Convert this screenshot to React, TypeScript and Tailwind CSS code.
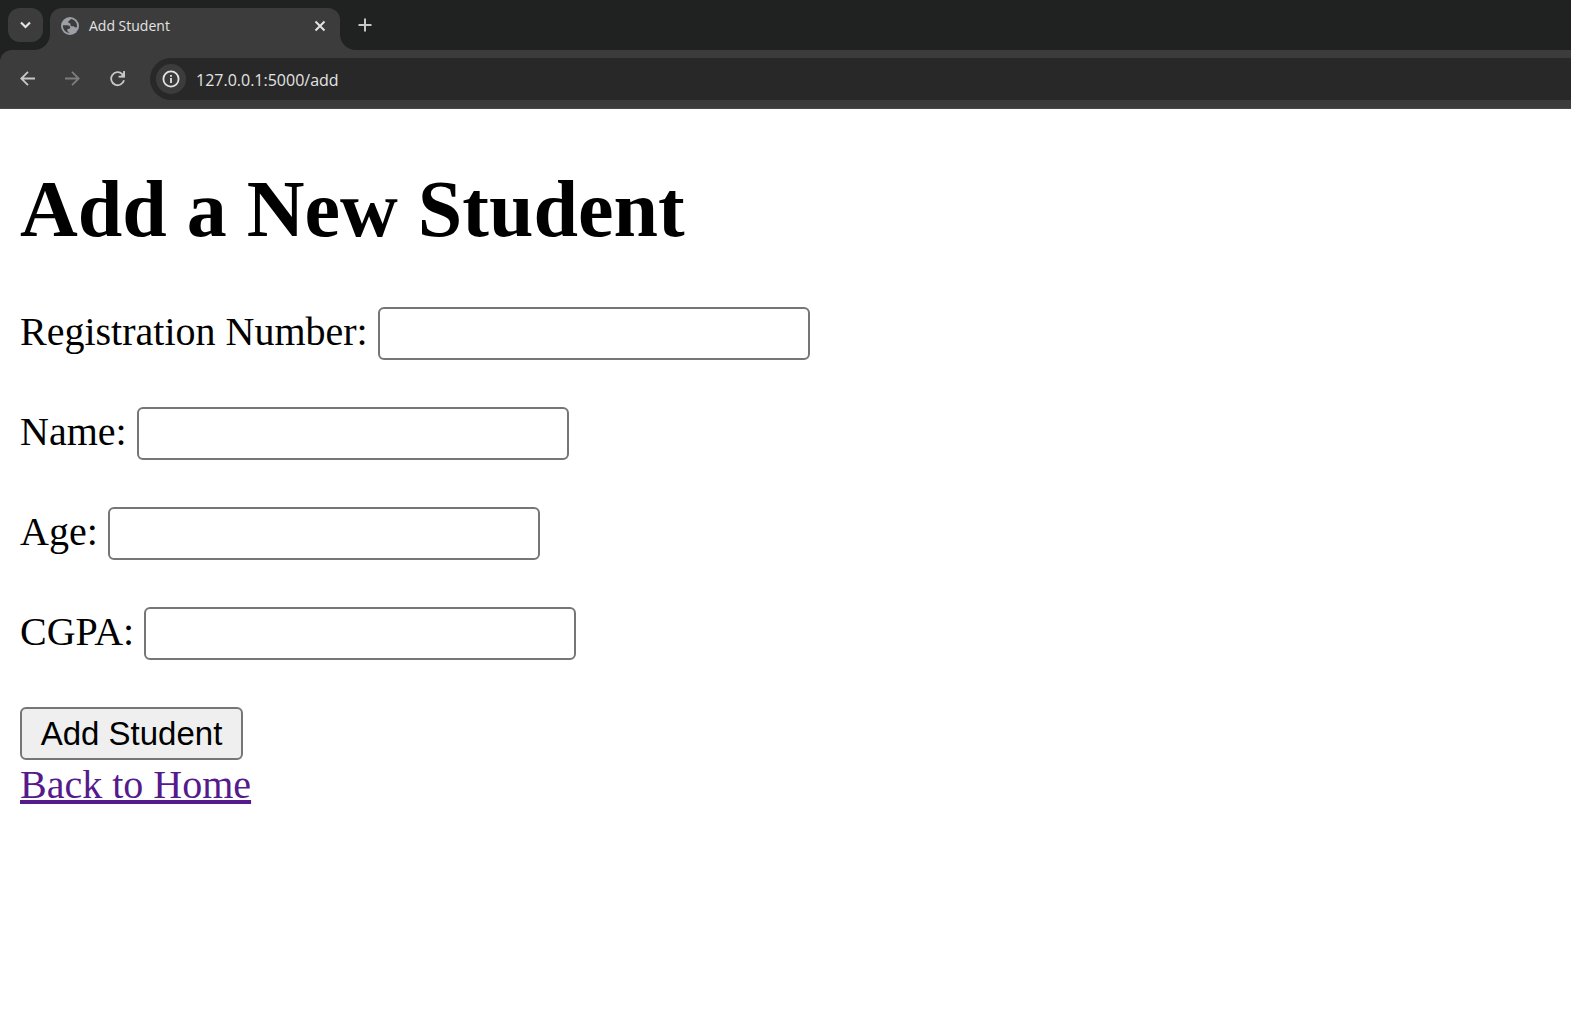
import type { ReactNode } from "react";

function TabFlare({ flip = false }: { flip?: boolean }) {
  return (
    <svg
      className={flip ? "h-4 w-4 self-end -scale-x-100" : "h-4 w-4 self-end"}
      viewBox="0 0 16 16"
      fill="#3c3c3c"
      aria-hidden="true"
    >
      <path d="M16 0v16H0C9 16 16 9 16 0Z" />
    </svg>
  );
}

function Globe() {
  return (
    <svg className="h-[18px] w-[18px] shrink-0" viewBox="0 0 18 18" aria-hidden="true">
      <circle cx="9" cy="9" r="9" fill="#9aa0a6" />
      <path
        d="M10.500 2C9.500 2.200 9.300 3 8.600 3.400 7.600 3.900 7 4.300 7.200 5.200c.2.900 1.500.8 2 1.300.6.600 0 1.500.5 2.200.6.800 1.900.3 2.800.600.900.3 1 1.200 1.900 1.200.7 0 1.200-.2 1.700-.500A7.200 7.200 0 0 0 10.500 2Z"
        fill="#3c3c3c"
      />
      <path
        d="M1.900 8.300h4.300c1.700 0 3 .8 3 2.200 0 1.100-.8 1.400-1.900 1.400-.9 0-1 .5-1 1.200 0 .9.200 1.700 1.200 1.800.7.100.900.500.8 1.200A7.200 7.200 0 0 1 1.900 8.300Z"
        fill="#3c3c3c"
      />
    </svg>
  );
}

function Glyph({ label, className, children }: { label: string; className: string; children: ReactNode }) {
  return (
    <button type="button" aria-label={label} className={className}>
      <svg
        className="h-4 w-4"
        viewBox="0 0 16 16"
        fill="none"
        stroke="currentColor"
        strokeWidth="1.800"
        aria-hidden="true"
      >
        {children}
      </svg>
    </button>
  );
}

function BrowserChrome() {
  return (
    <header className="font-['Open_Sans','Noto_Sans',sans-serif]">
      <div className="flex h-[50px] bg-[#202221]">
        <Glyph
          label="Search tabs"
          className="mt-2 ml-2 flex h-[34px] w-[35px] items-center justify-center rounded-xl bg-[#3c3c3c] text-[#e3e3e3]"
        >
          <path d="M3 5.500 7.500 10 12 5.500" strokeWidth="2.200" />
        </Glyph>
        <div className="-ml-[9px] flex">
          <TabFlare />
          <div className="mt-2 flex w-[290px] items-center rounded-t-xl bg-[#3c3c3c] pr-3 pb-1.5 pl-[11px]">
            <Globe />
            <span className="ml-2.5 grow text-sm text-[#e3e3e3]">Add Student</span>
            <Glyph label="Close tab" className="flex h-4 w-4 items-center justify-center text-[#e3e3e3]">
              <path d="m3.500 3.500 9 9m0-9-9 9" strokeWidth="2" />
            </Glyph>
          </div>
          <TabFlare flip />
        </div>
        <Glyph label="New tab" className="mt-[17px] ml-px flex h-4 w-4 items-center justify-center text-[#c7c7c7]">
          <path d="M8 1.500v13M1.500 8h13" strokeWidth="2" />
        </Glyph>
      </div>
      <div className="bg-[#202221]">
        <div className="flex h-[59px] items-center rounded-tl-xl border-b border-[#4a484a] bg-[#3c3c3c] pl-5">
          <nav className="flex gap-[29px]">
            <Glyph label="Back" className="text-[#c7c7c7]">
              <path d="M15 7.500H1.500M8 .8 1.300 7.500 8 14.200" />
            </Glyph>
            <Glyph label="Forward" className="text-[#7d7d7d]">
              <path d="M0 7.500h13.500M7 .8l6.700 6.700L7 14.200" />
            </Glyph>
            <Glyph label="Reload" className="text-[#c7c7c7]">
              <path d="M14 9.300A6.500 6.500 0 1 1 12.300 3.100L14 5" />
              <path d="M14.100 0v5.700H8.500" />
              <path d="M14.800 0v6.300h-5.500L11.500 4.300Z" fill="currentColor" stroke="none" />
            </Glyph>
          </nav>
          <div className="ml-6 flex h-[42px] grow items-center rounded-l-full bg-[#282828] pl-1.5">
            <button
              type="button"
              aria-label="View site information"
              className="flex h-[30px] w-[30px] items-center justify-center rounded-full bg-[#3c3c3c] text-[#e3e3e3]"
            >
              <svg className="h-[18px] w-[18px]" viewBox="0 0 18 18" fill="none" stroke="currentColor" strokeWidth="1.800" aria-hidden="true">
                <circle cx="9" cy="9" r="7.600" />
                <path d="M9 8v5M9 5v1.800" />
              </svg>
            </button>
            <input
              aria-label="Address"
              defaultValue="127.0.0.1:5000/add"
              className="ml-2.5 grow bg-transparent pt-0.5 text-base text-[#e3e3e3] outline-none"
            />
          </div>
        </div>
      </div>
    </header>
  );
}

function Field({ id, label }: { id: string; label: string }) {
  return (
    <div className="flex items-start gap-2.5">
      <label htmlFor={id}>{label}</label>
      <input
        id={id}
        type="text"
        className="h-[53px] w-[432px] rounded-md border-2 border-[#767676] bg-white px-1 font-['Liberation_Sans',Arial,sans-serif] text-[33px]"
      />
    </div>
  );
}

export default function App() {
  return (
    <div className="min-h-screen bg-white text-black">
      <BrowserChrome />
      <main className="px-5 pt-[55px] font-['Liberation_Serif','Times_New_Roman',serif] text-[40px] leading-[50px]">
        <h1 className="text-[80px] leading-[90px] font-bold">Add a New Student</h1>
        <form className="mt-[53px] flex flex-col items-start gap-[47px]" onSubmit={(e) => e.preventDefault()}>
          <Field id="reg" label="Registration Number:" />
          <Field id="name" label="Name:" />
          <Field id="age" label="Age:" />
          <Field id="cgpa" label="CGPA:" />
          <button
            type="submit"
            className="h-[53px] min-w-[223px] rounded-md border-2 border-[#767676] bg-[#efefef] px-4 font-['Liberation_Sans',Arial,sans-serif] text-[33px] leading-[38px]"
          >
            Add Student
          </button>
        </form>
        <a href="#home" className="text-[#551a8b] underline decoration-4 underline-offset-2">
          Back to Home
        </a>
      </main>
    </div>
  );
}
